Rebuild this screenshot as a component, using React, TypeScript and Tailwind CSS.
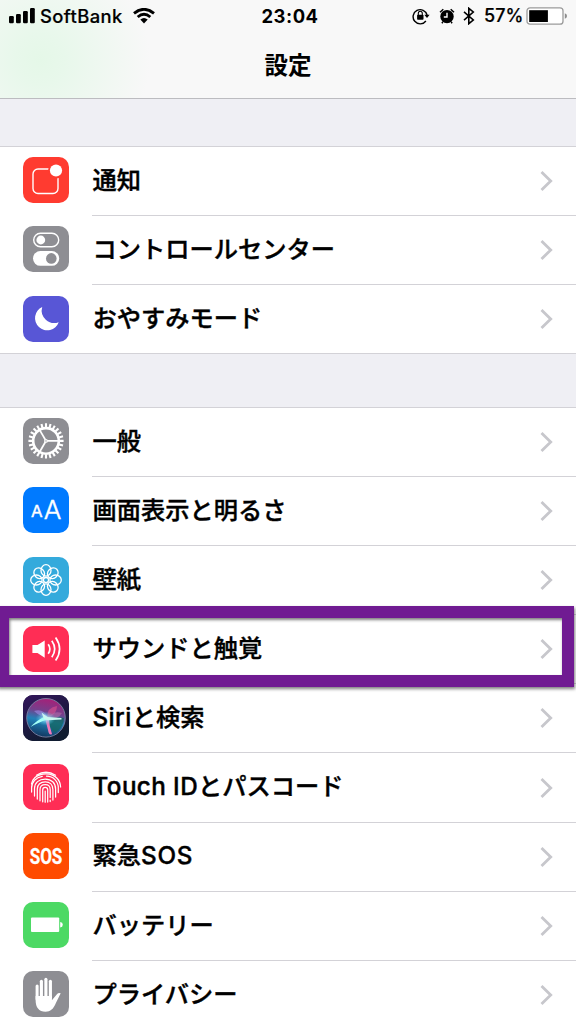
import React from "react";

interface RowProps {
  label: React.ReactNode;
  icon: React.ReactNode;
  color: string;
  last?: boolean;
}

const NotificationIcon = () => (
  <>
    <rect x="10" y="12" width="25" height="24.5" rx="5" fill="none" stroke="#fff" strokeWidth="1.4" />
    <circle cx="33" cy="13.5" r="8" fill="#ff3b30" />
    <circle cx="33" cy="13.5" r="6.1" fill="#fff" />
  </>
);

const ControlIcon = () => (
  <>
    <rect x="10.7" y="7.2" width="25" height="13.6" rx="6.8" fill="none" stroke="#fff" strokeWidth="1.4" />
    <circle cx="17.8" cy="14" r="4.4" fill="#fff" />
    <rect x="10" y="25" width="26.2" height="14.8" rx="7.4" fill="#fff" />
    <circle cx="28.3" cy="32.4" r="5.3" fill="#8e8e93" />
  </>
);

const MoonIcon = () => (
  <path d="M19.2 11A12.2 12.2 0 1 0 35.7 26.2A12.6 12.6 0 0 1 19.2 11Z" fill="#fff" />
);

const GearIcon = () => (
  <g fill="none" stroke="#fff" transform="translate(23 22.9)">
    <circle r="12.8" strokeWidth="2.6" />
    {Array.from({ length: 24 }, (_, i) => (
      <path key={i} d="M13.5 0H17.6" strokeWidth="2.1" transform={`rotate(${i * 15})`} />
    ))}
    {[0, 120, 240].map((angle) => (
      <path key={angle} d="M1 0H12.5" strokeWidth="1.7" transform={`rotate(${angle})`} />
    ))}
    <circle r="1.3" strokeWidth="1.2" fill="#8e8e93" />
  </g>
);

const DisplayIcon = () => (
  <g fill="#fff" stroke="#fff" strokeWidth="0.4" className="font-[Inter,sans-serif]">
    <text x="8" y="29.6" fontSize="16" textLength="11.6" lengthAdjust="spacingAndGlyphs">A</text>
    <text x="20.8" y="32" fontSize="25" fontWeight="300" textLength="17.6" lengthAdjust="spacingAndGlyphs">A</text>
  </g>
);

const WallpaperIcon = () => (
  <g fill="none" stroke="#fff" strokeWidth="1.3" transform="translate(23 23)">
    {Array.from({ length: 8 }, (_, i) => (
      <ellipse key={i} cx="9.6" cy="0" rx="5.7" ry="5" transform={`rotate(${i * 45})`} />
    ))}
    <circle r="2.5" />
  </g>
);

const SoundIcon = () => (
  <>
    <path d="M9.4 19H14.5L21.7 14.4V31.7L14.5 27H9.4Z" fill="#fff" />
    <g fill="none" stroke="#fff" strokeWidth="1.7">
      <path d="M25.2 18.2Q28.6 23 25.2 27.8" />
      <path d="M28.8 14.8Q34.6 23 28.8 31.2" />
      <path d="M32.6 11.5Q40.6 23 32.6 34.5" />
    </g>
  </>
);

const SiriIcon = () => (
  <>
    <defs>
      <linearGradient id="siriBack" x1="0" y1="0" x2="0.5" y2="1">
        <stop offset="0" stopColor="#33155c" />
        <stop offset="1" stopColor="#101c30" />
      </linearGradient>
      <linearGradient id="siriOrb" x1="0.6" y1="0" x2="0.4" y2="1">
        <stop offset="0" stopColor="#a81f78" />
        <stop offset="0.35" stopColor="#74408c" />
        <stop offset="0.58" stopColor="#2182b8" />
        <stop offset="1" stopColor="#12365f" />
      </linearGradient>
      <radialGradient id="siriGlow">
        <stop offset="0" stopColor="#fff" />
        <stop offset="0.3" stopColor="#9feaff" stopOpacity="0.7" />
        <stop offset="1" stopColor="#4ac8e8" stopOpacity="0" />
      </radialGradient>
    </defs>
    <rect width="46" height="46" fill="url(#siriBack)" />
    <circle cx="23" cy="22.8" r="19.3" fill="url(#siriOrb)" stroke="#7d83a5" strokeWidth="0.9" />
    <path d="M25 24Q34 21 41 23Q41 32 32 38Q26 33 25 24" fill="#14655f" opacity="0.75" />
    <path d="M11 16Q20 13 25 22Q17 22 11 16" fill="#9a8be0" opacity="0.65" />
    <path d="M24 23Q24 12 34 11Q34 19 25 23" fill="#e0508f" opacity="0.6" />
    <path d="M24 23Q31 15 39 18Q35 25 24 24" fill="#b56aa6" opacity="0.6" />
    <path d="M22 23L26 24Q26 31 29 39Q26 41 25 35Z" fill="#ee78ba" />
    <ellipse cx="22.5" cy="23.5" rx="10" ry="7" fill="url(#siriGlow)" />
    <path d="M7.5 32Q14 25 22 21.5L24 24.5Q14 28 7.5 32Z" fill="#a3fff6" />
    <path d="M18.5 17.5L24.5 22L38.5 23L38.5 24.5L25 25.2L21 24Z" fill="#c9f7ef" />
  </>
);

const FingerprintIcon = () => (
  <g fill="none" stroke="#fff" strokeWidth="1.25" strokeLinecap="round">
    <path d="M13.4 11.2Q23 5.3 32.6 11.2" />
    <path d="M8.5 20Q9.4 15.8 12 13.5C18.5 8.4 28.6 8.7 34 14.2Q37.3 17.5 37.6 23" />
    <path d="M8.6 28V24C8.6 18 13 13.2 19.3 12.3M23.5 12.2C30.5 12.2 35.3 17.5 35.3 24V28.5" />
    <path d="M11.5 32V24.5C11.5 18.8 16 15 22.3 15C28.5 15 32.6 19 32.6 25V33" />
    <path d="M14.3 35V25C14.3 20.8 17.5 17.8 22.3 17.8C26.8 17.8 29.9 20.8 29.9 25.5V36" />
    <path d="M17 36.8V25.5C17 22.4 19.2 20.5 22.3 20.5C25.4 20.5 27.2 22.6 27.2 25.6V33.5M27.2 36V37.5" />
    <path d="M19.7 37.8V26C19.7 22.5 24.7 22.5 24.7 26V38" />
    <path d="M22.2 27V38.2" />
  </g>
);

const SosIcon = () => (
  <g transform="scale(0.78 1)">
    <text x="29.5" y="30.8" fontSize="21.8" fontWeight="700" fill="#fff" stroke="#fff" strokeWidth="0.3" textAnchor="middle" className="font-[Roboto,sans-serif]">SOS</text>
  </g>
);

const BatteryIcon = () => (
  <g fill="#fff">
    <rect x="8" y="15.6" width="28.2" height="14.3" rx="1" />
    <path d="M37.2 20Q39.8 20.3 39.8 22.8Q39.8 25.2 37.2 25.5Z" />
  </g>
);

const HandIcon = () => (
  <g stroke="#fff" fill="none" strokeLinecap="round">
    <path d="M14.1 15V28" strokeWidth="3" />
    <path d="M18.4 10.2V27" strokeWidth="3.1" />
    <path d="M22.9 8.2V27" strokeWidth="3.1" />
    <path d="M27.4 10.2V27" strokeWidth="3.1" />
    <path d="M12.6 25H28.9V29.3L33.7 23.4Q35.6 21.2 37.7 22.3L33 31.8C30.4 38.2 27.5 40.7 22.5 40.7C15.8 40.7 12.6 36.3 12.6 29Z" fill="#fff" stroke="none" />
  </g>
);

const Row = ({ label, icon, color, last }: RowProps) => (
  <div className={`flex shrink-0 items-start pl-[23px] ${last ? "h-[67.8px]" : "h-[69.1px]"}`}>
    <svg viewBox="0 0 46 46" className={`mt-[10.4px] size-[46px] shrink-0 rounded-[10px] ${color}`}>
      {icon}
    </svg>
    <div className={`ml-[23px] flex h-full flex-1 items-center justify-between pr-[23px] ${last ? "" : "border-b border-[#d3d2d7]"}`}>
      <span className="pl-[0.5px] text-[24.25px] leading-none font-medium whitespace-nowrap [-webkit-text-stroke:0.4px_#000]">{label}</span>
      <svg viewBox="0 0 13 20" className="h-5 w-[13px] fill-none stroke-[#c7c7cc] stroke-[2.8]">
        <path d="M1.5 1L10.7 10L1.5 19" />
      </svg>
    </div>
  </div>
);

const StatusBar = () => (
  <div className="grid h-8 grid-cols-3 items-center font-[Inter,sans-serif] text-[18px] leading-none">
    <div className="flex items-center pl-[9px]">
      <svg viewBox="0 0 26 16" className="h-4 w-[26px]">
        <rect y="8" width="4.8" height="7.2" rx="1.2" />
        <rect x="7" y="6" width="4.8" height="9.2" rx="1.2" />
        <rect x="14" y="3" width="4.8" height="12.2" rx="1.2" />
        <rect x="21" width="4.8" height="15.2" rx="1.2" />
      </svg>
      <span className="ml-[5px] w-[83px] text-[18.4px] font-medium tracking-[0.4px] [-webkit-text-stroke:0.2px_#000]">SoftBank</span>
      <svg viewBox="0 0 22 16" className="ml-[10px] h-4 w-[22px] fill-none stroke-black stroke-[2.9]">
        <path d="M1 5.3Q11 -2.6 21 5.3" />
        <path d="M4.7 9Q11 3.6 17.3 9" />
        <path d="M7.3 11.6Q11 8.5 14.7 11.6L11 15.5Z" fill="#000" stroke="none" />
      </svg>
    </div>
    <span className="pl-1 text-center text-[18.4px] font-bold tracking-[0.5px]">23:04</span>
    <div className="flex items-center justify-end pr-[8px]">
      <svg viewBox="0 0 18 18" className="size-[18px]">
        <path d="M13.9 14A7.1 7.1 0 1 1 15.1 8" fill="none" stroke="#000" strokeWidth="1.4" />
        <path d="M12.3 7.8H17.6L15 11Z" />
        <rect x="5.1" y="7.7" width="6.4" height="5" rx="0.7" />
        <path d="M6.3 8V6.4C6.3 3.5 10.3 3.5 10.3 6.4V8" fill="none" stroke="#000" strokeWidth="1.1" />
      </svg>
      <svg viewBox="0 0 16 17" className="ml-[9px] h-[17px] w-4">
        <circle cx="8" cy="8.6" r="6.7" />
        <path d="M1 4.2L4.3 1.2M11.7 1.2L15 4.2M3.8 14L2.9 15.2M12.2 14L13.1 15.2" stroke="#000" strokeWidth="1.5" />
        <path d="M8 4.7V9H4.8" fill="none" stroke="#fff" strokeWidth="1.4" />
      </svg>
      <svg viewBox="0 0 12 18" className="ml-[8px] h-[18px] w-3">
        <path d="M1 4.8L10.3 13L5.8 16.7V1.3L10.3 5L1 13.2" fill="none" stroke="#000" strokeWidth="1.6" />
      </svg>
      <span className="ml-[9px] w-[39px] font-medium [-webkit-text-stroke:0.2px_#000]">57%</span>
      <svg viewBox="0 0 42 18" className="ml-[3px] h-[18px] w-[42px]">
        <rect x="1" y="0.8" width="36" height="16.4" rx="3" fill="#fff" stroke="#9b9b9b" strokeWidth="1.3" />
        <rect x="3.2" y="3.2" width="18.7" height="11.8" />
        <path d="M38.8 6.2Q41 6.8 41 9Q41 11.2 38.8 11.8Z" fill="#8d8d8d" />
      </svg>
    </div>
  </div>
);

const App = () => {
  return (
    <div className="relative flex h-[1024px] w-[576px] flex-col overflow-hidden bg-[#efeff4] font-[Inter,'Noto_Sans_CJK_JP',sans-serif] text-black">
      <header className="flex h-[99px] shrink-0 flex-col border-b border-[#bcbcc0] bg-[#f8f8f8] bg-[radial-gradient(circle_at_40px_60px,#e5f8e8_0px,#e8f8eb_25px,#f8f8f8_110px)]">
        <StatusBar />
        <h1 className="pt-[22px] text-center text-[23.5px] leading-none font-bold">設定</h1>
      </header>

      <section className="mt-[47px] flex shrink-0 flex-col border-y border-[#d3d2d7] bg-white">
        <Row label="通知" icon={<NotificationIcon />} color="bg-[#ff3b30]" />
        <Row label="コントロールセンター" icon={<ControlIcon />} color="bg-[#8e8e93]" />
        <Row label="おやすみモード" icon={<MoonIcon />} color="bg-[#5856d6]" last />
      </section>

      <section className="mt-[53px] flex shrink-0 flex-col border-t border-[#d3d2d7] bg-white">
        <Row label="一般" icon={<GearIcon />} color="bg-[#8e8e93]" />
        <Row label="画面表示と明るさ" icon={<DisplayIcon />} color="bg-[#007aff]" />
        <Row label="壁紙" icon={<WallpaperIcon />} color="bg-[#34aadc]" />
        <Row label="サウンドと触覚" icon={<SoundIcon />} color="bg-[#ff2d55]" />
        <Row label={<><span className="tracking-[0.4px]">Siri</span>と検索</>} icon={<SiriIcon />} color="bg-[#181c32]" />
        <Row label={<><span className="tracking-[0.4px]">Touch ID</span>とパスコード</>} icon={<FingerprintIcon />} color="bg-[#ff2d55]" />
        <Row label={<>緊急<span className="tracking-[0.8px]">SOS</span></>} icon={<SosIcon />} color="bg-[#ff4b00]" />
        <Row label="バッテリー" icon={<BatteryIcon />} color="bg-[#4cd964]" />
        <Row label="プライバシー" icon={<HandIcon />} color="bg-[#8e8e93]" />
      </section>

      {/* highlight around the sound row */}
      <div className="absolute top-[606px] -left-[3px] h-[81px] w-[577px] border-[12.5px] border-[#701b92] shadow-[1px_2px_3px_rgba(0,0,0,0.5),inset_1px_2px_3px_rgba(0,0,0,0.5)]" />
    </div>
  );
};

export default App;
